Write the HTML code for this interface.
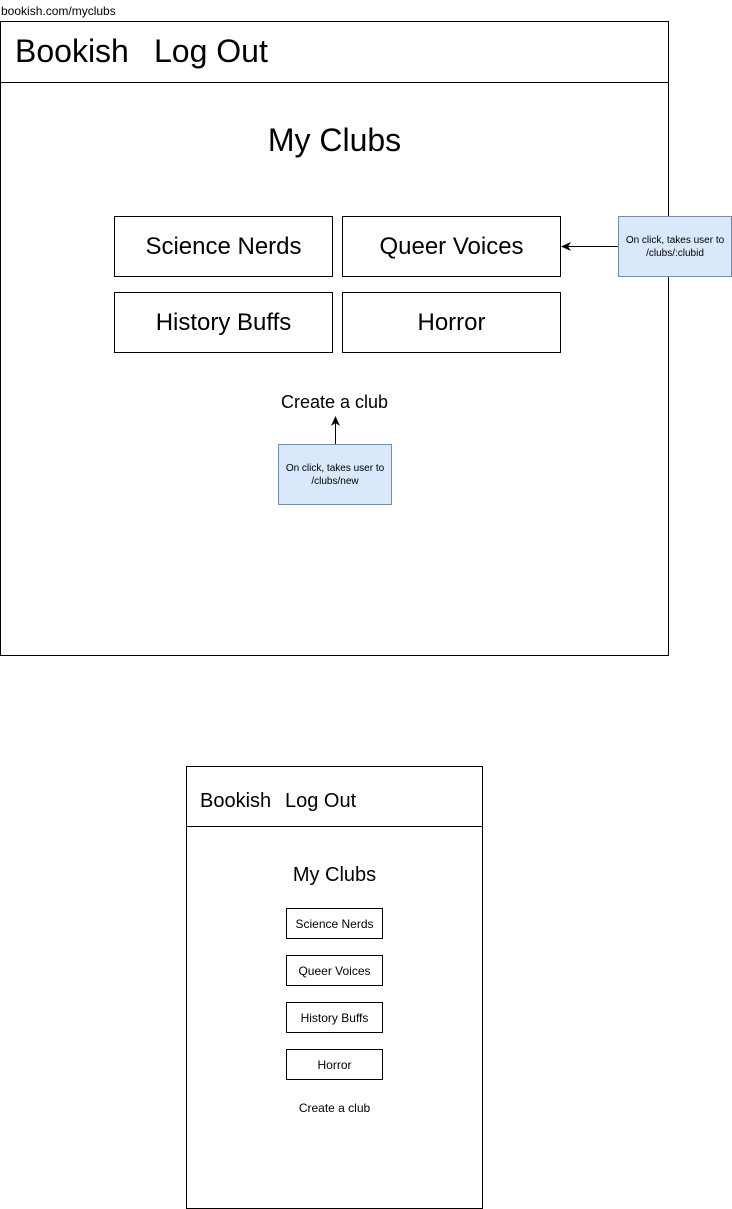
<!DOCTYPE html>
<html><head><meta charset="utf-8"><style>
*{margin:0;padding:0;box-sizing:border-box}
body{width:732px;height:1209px;background:#fff;position:relative;font-family:"Liberation Sans",Helvetica,Arial,sans-serif;color:#000;overflow:hidden}
.a{position:absolute}
.b{position:absolute;border:1px solid #000;display:flex;align-items:center;justify-content:center;text-align:center}
.n{position:absolute;background:#dae8fc;border:1px solid #6c8ebf;display:flex;align-items:center;justify-content:center;text-align:center;font-size:10px;line-height:13px}
</style></head><body>
<div class="a" style="left:1px;top:4px;font-size:12px">bookish.com/myclubs</div>
<div class="a" style="left:0;top:21px;width:669px;height:635px;border:1px solid #000"></div>
<div class="a" style="left:0;top:82px;width:669px;height:1px;background:#000"></div>
<div class="a" style="left:15px;top:33px;font-size:32px">Bookish</div>
<div class="a" style="left:154px;top:33px;font-size:32px">Log Out</div>
<div class="a" style="left:0;top:122px;width:669px;text-align:center;font-size:32px">My Clubs</div>
<div class="b" style="left:114px;top:216px;width:219px;height:61px;font-size:24px">Science Nerds</div>
<div class="b" style="left:342px;top:216px;width:219px;height:61px;font-size:24px">Queer Voices</div>
<div class="b" style="left:114px;top:292px;width:219px;height:61px;font-size:24px">History Buffs</div>
<div class="b" style="left:342px;top:292px;width:219px;height:61px;font-size:24px">Horror</div>
<div class="a" style="left:0;top:392px;width:669px;text-align:center;font-size:18px">Create a club</div>
<div class="n" style="left:618px;top:216px;width:114px;height:61px">On click, takes user to<br>/clubs/:clubid</div>
<div class="n" style="left:278px;top:444px;width:114px;height:61px">On click, takes user to<br>/clubs/new</div>
<svg class="a" style="left:0;top:0" width="732" height="600">
<line x1="618" y1="246.5" x2="568" y2="246.5" stroke="#000" stroke-width="1"/>
<polygon points="561,246.5 571,242 568,246.5 571,251" fill="#000"/>
<line x1="335.5" y1="444" x2="335.5" y2="423" stroke="#000" stroke-width="1"/>
<polygon points="335.5,416 331,426 335.5,423 340,426" fill="#000"/>
</svg>
<div class="a" style="left:186px;top:766px;width:297px;height:443px;border:1px solid #000"></div>
<div class="a" style="left:186px;top:826px;width:297px;height:1px;background:#000"></div>
<div class="a" style="left:200px;top:790px;font-size:20px">Bookish</div>
<div class="a" style="left:285px;top:790px;font-size:20px">Log Out</div>
<div class="a" style="left:186px;top:864px;width:297px;text-align:center;font-size:20px">My Clubs</div>
<div class="b" style="left:286px;top:908px;width:97px;height:31px;font-size:12px">Science Nerds</div>
<div class="b" style="left:286px;top:955px;width:97px;height:31px;font-size:12px">Queer Voices</div>
<div class="b" style="left:286px;top:1002px;width:97px;height:31px;font-size:12px">History Buffs</div>
<div class="b" style="left:286px;top:1049px;width:97px;height:31px;font-size:12px">Horror</div>
<div class="a" style="left:186px;top:1101px;width:297px;text-align:center;font-size:12px">Create a club</div>
</body></html>
